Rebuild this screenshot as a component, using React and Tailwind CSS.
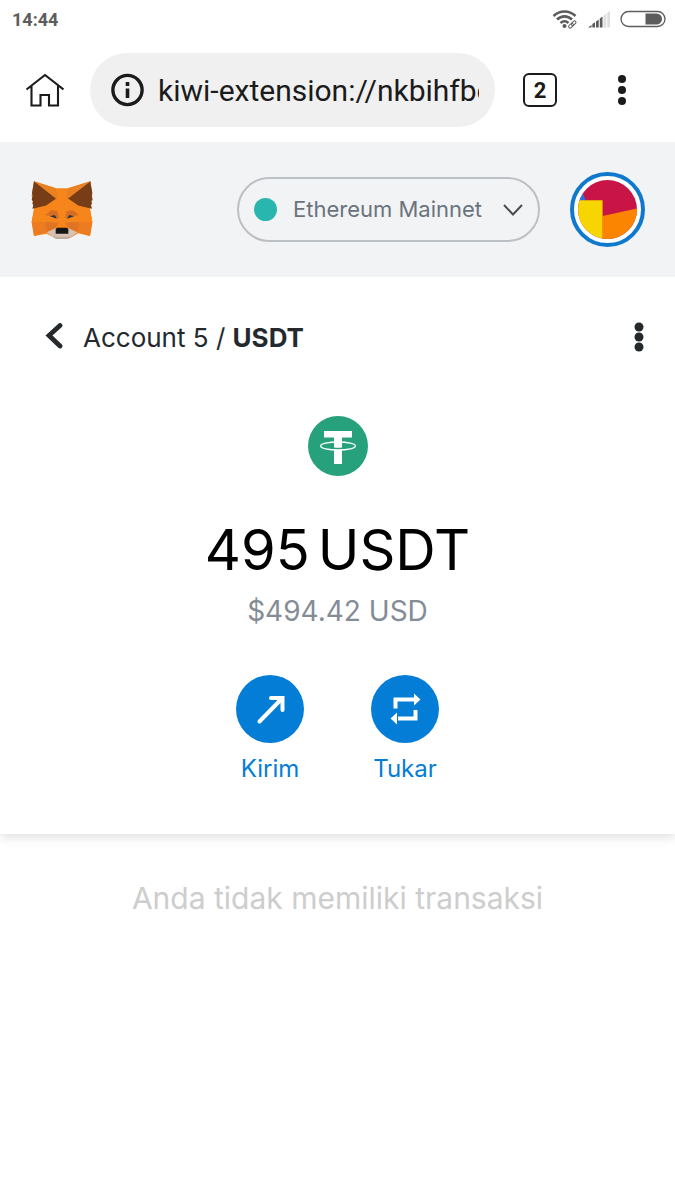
import { useState } from 'react';

function StatusBar() {
  return (
    <div className="flex h-10 items-center justify-between pl-3 pr-2 text-[#5c5c5c]">
      <span className="font-['Roboto',sans-serif] text-lg font-bold">14:44</span>
      <div className="flex items-center gap-2" aria-hidden="true">
        <svg className="h-5 w-7" viewBox="0 0 28 20" fill="none" stroke="currentColor">
          <path d="M2.500 6C9 0 18 0 24.500 6M6 9.500C10.500 5.300 16.500 5.300 21 9.500M9.500 13C12 10.800 15 10.800 17.500 13" strokeWidth="2.600" />
          <circle cx="13.500" cy="16" r="2" fill="currentColor" stroke="none" />
          <rect x="18" y="13" width="8" height="3.500" rx="1.700" transform="rotate(-45 22 14.700)" stroke="white" strokeWidth="3" />
          <rect x="17.500" y="14.300" width="5.500" height="3" rx="1.500" transform="rotate(-45 20 16)" strokeWidth="1" />
          <rect x="20.500" y="11.700" width="5.500" height="3" rx="1.500" transform="rotate(-45 23 14)" strokeWidth="1" />
        </svg>
        <svg className="h-5 w-6" viewBox="0 0 24 20" fill="currentColor">
          <path d="M1 17.500L4.500 15v2.500zM5.300 14l2.700-1.700v5.200H5.300zM9 11.500l2.700-2v8H9zM12.800 8.500l2.700-2v11h-2.700z" />
          <path d="M16.500 5.500l2.800-2v14h-2.800zM20.300 3L23 1v16.500h-2.700z" fill="#dedede" />
        </svg>
        <svg className="h-5 w-12" viewBox="0 0 48 20">
          <rect x="2" y="1.500" width="44" height="15" rx="7.500" fill="none" stroke="currentColor" strokeWidth="1.300" />
          <path d="M26.500 3.500h11a5.500 5.500 0 0 1 0 11h-11z" fill="currentColor" />
        </svg>
      </div>
    </div>
  );
}

function BrowserBar() {
  return (
    <div className="flex h-[102px] items-center bg-white pb-[2px] pl-6 text-[#1b1b1b]">
      <button type="button" aria-label="Home" className="shrink-0">
        <svg className="h-10 w-10" viewBox="0 0 40 40" fill="none" stroke="currentColor">
          <path d="M2.500 19.500L21 5l18.500 14.500M7.500 16v19.500h9V25h8.500v10.500h9V16" strokeWidth="2.100" />
        </svg>
      </button>
      <div className="ml-[26px] flex h-[74px] min-w-0 flex-1 items-center gap-3 rounded-full bg-[#f0f0f0] pl-5 pr-4">
        <svg className="h-9 w-9 shrink-0" viewBox="0 0 36 36" fill="none" aria-hidden="true">
          <circle cx="17.500" cy="18" r="14.600" stroke="currentColor" strokeWidth="3.400" />
          <path d="M17.500 10v4M17.500 16.500V26" stroke="currentColor" strokeWidth="3.600" />
        </svg>
        <input
          type="text"
          aria-label="Address"
          defaultValue="kiwi-extension://nkbihfbeogaeaoehlefnkodbefgpgknn"
          className="min-w-0 flex-1 bg-transparent font-['Roboto',sans-serif] text-[30px] outline-none"
        />
      </div>
      <button
        type="button"
        aria-label="Tabs"
        className="ml-7 flex h-[34px] w-[34px] shrink-0 items-center justify-center rounded-md border-2 border-current font-['Roboto',sans-serif] text-[22px] font-bold"
      >
        2
      </button>
      <button type="button" aria-label="Menu" className="ml-[50px] mr-9 shrink-0">
        <svg className="h-9 w-8" viewBox="0 0 32 36" fill="currentColor">
          <circle cx="15" cy="7" r="4" />
          <circle cx="15" cy="18" r="4" />
          <circle cx="15" cy="29" r="4" />
        </svg>
      </button>
    </div>
  );
}

function FoxLogo() {
  return (
    <svg className="h-[58px] w-[62px] shrink-0" viewBox="36 34 184 174" role="img" aria-label="MetaMask">
      <path d="M44 35l66 21h36l67-21 6 43-7 40 7 38-7 43-36-8-23 14h-46l-25-13-38 7-7-43 7-38-7-40z" fill="#f6851b" />
      <path d="M44 35l68 51-33 22-40 9 3-11-3-4 2-8-4-3 3-13-2-8zM213 35l-68 51 33 22 40 9-3-11 3-4-2-8 4-3-3-13 2-8z" fill="#763d16" />
      <path d="M44 35l66 21 5 35zM213 35l-67 21-5 35z" fill="#e98022" />
      <path d="M37 157h40l5 31-38 11zM219 157h-40l-5 31 38 11z" fill="#ec7c1f" />
      <path d="M44 119l35-11 5 20-7 29H37zM212 119l-34-11-5 20 6 29h40z" fill="#f6851b" />
      <path d="M77 157l42 2-11 17-26 12zM179 157l-42 2 11 17 26 12z" fill="#e07324" />
      <path d="M78 136l18-15 18 4 5 21zM178 136l-18-15-18 4-5 21z" fill="#d66d20" />
      <path d="M92 140l14-4 7 11zM164 140l-14-4-7 11z" fill="#233447" />
      <path d="M119 93h18l-2 62-7 20-7-20z" fill="#f6851b" />
      <path d="M82 188l27-12h38l27 12-22 17h-47z" fill="#d7c1b3" />
      <path d="M104 196l6 5h36l7-5-1 9-7 3h-34l-7-4z" fill="#c0ad9e" />
      <path d="M113 174h30l4 4v14h-38v-14z" fill="#161616" />
    </svg>
  );
}

function AppHeader() {
  const [network, setNetwork] = useState('mainnet');

  return (
    <header className="relative z-10 flex h-[135px] items-center bg-[#f2f3f4] pl-[31px] pr-[30px]">
      <a href="#home">
        <FoxLogo />
      </a>
      <div className="ml-auto flex h-[65px] items-center rounded-full border-2 border-[#bbc0c5] px-[15px]">
        <span className="h-[23px] w-[23px] rounded-full bg-[#29b6af]" />
        <select
          aria-label="Network"
          value={network}
          onChange={(e) => setNetwork(e.target.value)}
          className="-mr-6 ml-4 appearance-none bg-transparent pr-9 text-[22px] text-[#6a737d] outline-none"
        >
          <option value="mainnet">Ethereum Mainnet</option>
        </select>
        <svg className="pointer-events-none ml-2 h-3 w-5" viewBox="0 0 20 12" fill="none" stroke="#4a4d50" strokeWidth="2" aria-hidden="true">
          <path d="M1 1l9 9.500L19 1" />
        </svg>
      </div>
      <button
        type="button"
        aria-label="Account"
        className="ml-[30px] h-[75px] w-[75px] shrink-0 rounded-full border-4 border-[#1078cd] bg-white p-1"
      >
        <svg className="h-full w-full" viewBox="0 0 60 60">
          <defs>
            <clipPath id="avatar">
              <circle cx="30" cy="30" r="30" />
            </clipPath>
          </defs>
          <g clipPath="url(#avatar)">
            <rect width="60" height="60" fill="#c81446" />
            <path d="M0 5l4 6 4 10H0z" fill="#2a72de" />
            <path d="M25 36.500L60 29v31H25z" fill="#fb8500" />
            <path d="M0 20.500h25V60H0z" fill="#f6d500" />
          </g>
        </svg>
      </button>
    </header>
  );
}

function AssetNav() {
  return (
    <nav className="flex h-[120px] items-center pl-11 pr-5 text-[#24292e]">
      <a href="#account" className="flex items-center">
        <svg className="h-7 w-5" viewBox="0 0 20 28" fill="none" stroke="currentColor" strokeWidth="4.800" strokeLinecap="round" aria-hidden="true">
          <path d="M16 2.500L5 12.500l11 10.500" />
        </svg>
        <span className="ml-[19px] text-[26px]">
          Account 5 / <strong className="font-bold">USDT</strong>
        </span>
      </a>
      <button type="button" aria-label="Options" className="ml-auto">
        <svg className="h-8 w-8" viewBox="0 0 32 32" fill="currentColor">
          <circle cx="16" cy="6" r="4.500" />
          <circle cx="16" cy="16" r="4.500" />
          <circle cx="16" cy="26" r="4.500" />
        </svg>
      </button>
    </nav>
  );
}

function TetherLogo() {
  return (
    <svg className="h-[60px] w-[60px]" viewBox="0 0 60 60" role="img" aria-label="Tether">
      <circle cx="30" cy="30" r="30" fill="#26a17b" />
      <ellipse cx="30" cy="30" rx="17.500" ry="4" fill="none" stroke="white" strokeWidth="1.300" />
      <path d="M16 15h28v6.500H34V29h-8v-7.500H16zM26 33.800h8V48h-8z" fill="white" />
      <path d="M26 27h8v4.500c-2.500.3-5.500.3-8 0z" fill="white" />
    </svg>
  );
}

function ActionButton({ label, children }) {
  return (
    <button type="button" className="flex w-[135px] flex-col items-center text-[#037dd6]">
      <span className="flex h-[68px] w-[68px] items-center justify-center rounded-full bg-[#037dd6] text-white">
        {children}
      </span>
      <span className="mt-2 text-2xl leading-9">{label}</span>
    </button>
  );
}

export default function App() {
  return (
    <div className="min-h-screen bg-white font-['Inter','Liberation_Sans',sans-serif]">
      <StatusBar />
      <BrowserBar />
      <AppHeader />
      <main>
        <section className="pb-[47px] shadow-[0_3px_10px_rgba(0,0,0,0.13)]">
          <AssetNav />
          <div className="flex flex-col items-center pt-[19px]">
            <TetherLogo />
            <h1 className="mt-[37px] flex gap-2 text-[56px] leading-[74px] text-black">
              <span>495</span>
              <span>USDT</span>
            </h1>
            <p className="mt-1 text-[28px] leading-10 text-[#848c96]">$494.42 USD</p>
            <div className="mt-11 flex">
              <ActionButton label="Kirim">
                <svg className="h-8 w-8" viewBox="0 0 32 32" fill="none" stroke="currentColor" strokeWidth="4" aria-hidden="true">
                  <path d="M5.500 28.500L27.500 6" strokeLinecap="round" />
                  <path d="M17 5h11.500v12" strokeLinecap="round" />
                </svg>
              </ActionButton>
              <ActionButton label="Tukar">
                <svg className="h-8 w-8" viewBox="0 0 32 32" fill="none" aria-hidden="true">
                  <path d="M6.500 15.500v-9H26M26.500 17v8.500H9" stroke="currentColor" strokeWidth="4" />
                  <path d="M25 .5l6.500 6-6.500 6zM8 19.500l-6.500 6 6.500 6z" fill="currentColor" />
                </svg>
              </ActionButton>
            </div>
          </div>
        </section>
        <p className="pt-11 text-center text-[30px] leading-10 text-[#cdcdcd]">Anda tidak memiliki transaksi</p>
      </main>
    </div>
  );
}
